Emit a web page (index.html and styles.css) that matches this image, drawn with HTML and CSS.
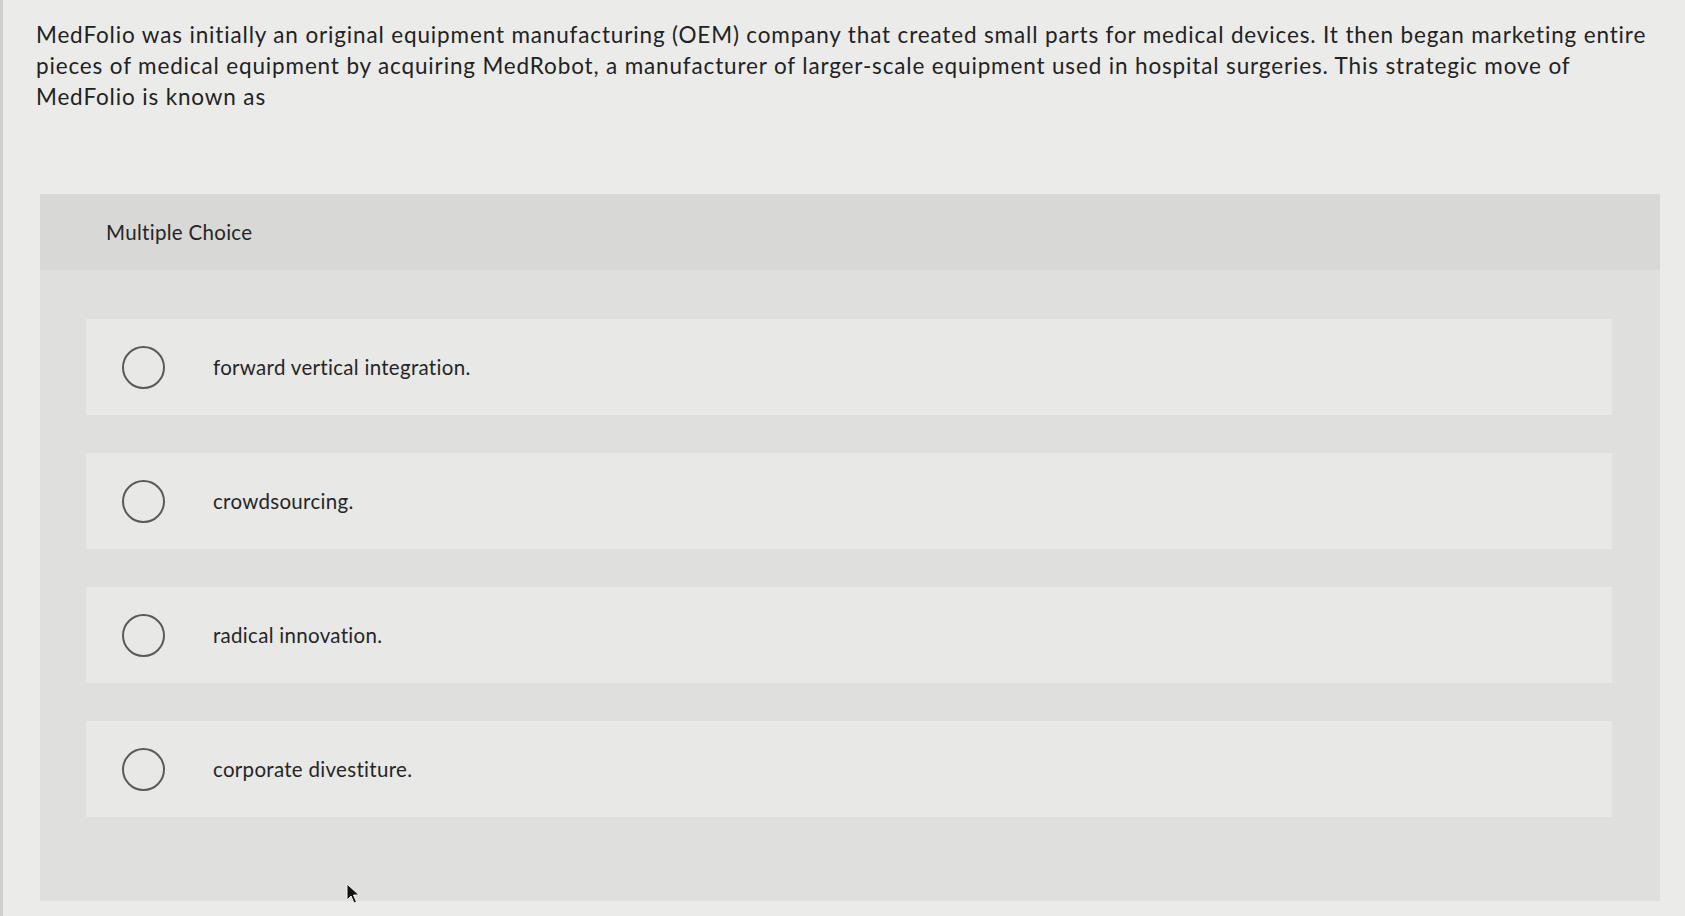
FILE: index.html
```html
<!DOCTYPE html>
<html lang="en">
<head>
<meta charset="utf-8">
<title>Multiple Choice</title>
<link rel="stylesheet" href="styles.css">
</head>
<body>
<div class="page">
  <p class="question">MedFolio was initially an original equipment manufacturing (OEM) company that created small parts for medical devices. It then began marketing entire pieces of medical equipment by acquiring MedRobot, a manufacturer of larger-scale equipment used in hospital surgeries. This strategic move of MedFolio is known as</p>
  <section class="card">
    <header class="card-head">Multiple Choice</header>
    <div class="card-body">
      <label class="option"><span class="radio"></span><span class="opt-text">forward vertical integration.</span></label>
      <label class="option"><span class="radio"></span><span class="opt-text">crowdsourcing.</span></label>
      <label class="option"><span class="radio"></span><span class="opt-text">radical innovation.</span></label>
      <label class="option"><span class="radio"></span><span class="opt-text">corporate divestiture.</span></label>
    </div>
  </section>
</div>
<svg class="cursor" width="14" height="22" viewBox="0 0 14 22"><path d="M1 1 L1 17 L5 13 L8 20 L10.5 19 L7.5 12 L13 12 Z" fill="#111" stroke="#f2f2f2" stroke-width="1"/></svg>
</body>
</html>
```
FILE: styles.css
```css
html, body {
  margin: 0;
  padding: 0;
}
body {
  background: #ebebe9;
  font-family: "Lato", "Open Sans", sans-serif;
  color: #222222;
  width: 1685px;
  height: 916px;
  overflow: hidden;
  position: relative;
  border-left: 3px solid #cfcfcd;
  box-sizing: border-box;
}
.page {
  padding: 19px 25px 0 33px;
}
.question {
  margin: 0;
  font-size: 22.5px;
  letter-spacing: 0.85px;
  line-height: 31px;
  width: 1625px;
}
.card {
  margin: 82px 0 0 4px;
  width: 1620px;
  height: 707px;
  background: #dfdfdd;
  display: flex;
  flex-direction: column;
}
.card-head {
  height: 76px;
  background: #d8d8d6;
  display: flex;
  align-items: center;
  padding-left: 66px;
  font-size: 20.5px;
  letter-spacing: 0.3px;
  color: #262626;
}
.card-body {
  padding: 49px 48px 0 46px;
  display: flex;
  flex-direction: column;
  gap: 38px;
}
.option {
  height: 96px;
  background: #e8e8e6;
  display: flex;
  align-items: center;
  padding-left: 36px;
  gap: 48px;
}
.radio {
  width: 39px;
  height: 39px;
  border: 2px solid #5a5a5a;
  border-radius: 50%;
  flex: none;
}
.opt-text {
  font-size: 20.5px;
  letter-spacing: 0.3px;
  color: #262626;
}
.cursor {
  position: absolute;
  left: 343px;
  top: 883px;
}
```
